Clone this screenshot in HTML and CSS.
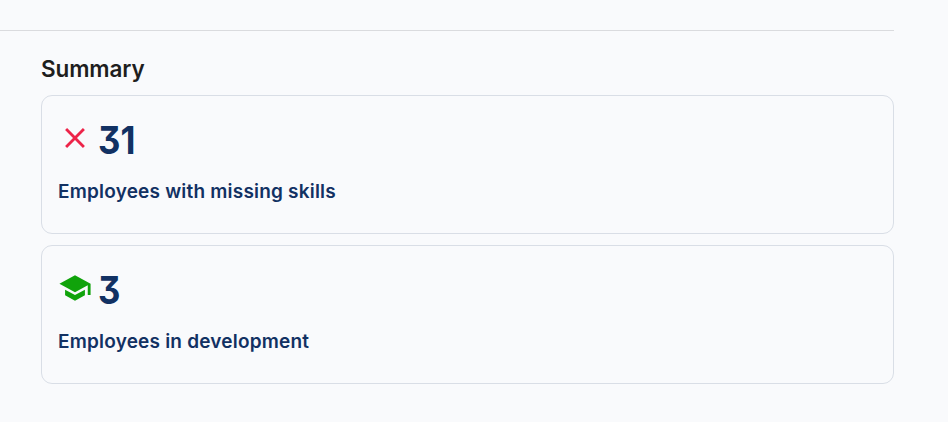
FILE: index.html
```html
<!DOCTYPE html>
<html lang="en">
<head>
<meta charset="utf-8">
<title>Summary</title>
<link rel="stylesheet" href="styles.css">
</head>
<body>
<main class="panel">
  <hr class="divider">
  <section class="summary">
    <h2 class="heading">Summary</h2>
    <article class="card">
      <div class="metric">
        <svg class="icon missing" viewBox="0 0 24 24"><path d="M19 6.41 17.59 5 12 10.59 6.41 5 5 6.41 10.59 12 5 17.59 6.41 19 12 13.41 17.59 19 19 17.59 13.41 12z"/></svg>
        <span class="value">31</span>
      </div>
      <p class="label">Employees with missing skills</p>
    </article>
    <article class="card">
      <div class="metric">
        <svg class="icon development" viewBox="0 0 24 24"><path d="M5 13.18v4L12 21l7-3.82v-4L12 17l-7-3.82zM12 3 1 9l11 6 9-4.91V17h2V9L12 3z"/></svg>
        <span class="value">3</span>
      </div>
      <p class="label">Employees in development</p>
    </article>
  </section>
</main>
</body>
</html>
```

FILE: styles.css
```css
* { box-sizing: border-box; }
body { margin: 0; background: #f9fafc; font-family: Inter, "Open Sans", sans-serif; color: #123163; }
.panel { width: 894px; padding-top: 30px; }
.divider { margin: 0; border: 0; height: 1px; background: #dadbde; }
.summary { display: flex; flex-direction: column; padding-left: 41px; }
.heading { margin: 22px 0 10px; height: 32px; line-height: 32px; font-size: 22.5px; font-weight: 600; color: #1e1e1e; letter-spacing: -0.1px; }
.card { height: 139px; margin-bottom: 11px; padding: 23px 16px; border: 1px solid #d9dee6; border-radius: 11px; }
.metric { display: flex; align-items: center; height: 42px; gap: 6px; }
.icon { width: 34px; height: 34px; margin-top: -4px; }
.missing { fill: #ed2449; }
.development { fill: #10a30b; }
.value { font-size: 38.5px; line-height: 42px; font-weight: 700; font-feature-settings: "cv09"; letter-spacing: 0; transform: scaleX(0.9); transform-origin: left; }
.label { margin: 18px 0 0; font-size: 19px; line-height: 26px; font-weight: 600; letter-spacing: 0.2px; }
```
